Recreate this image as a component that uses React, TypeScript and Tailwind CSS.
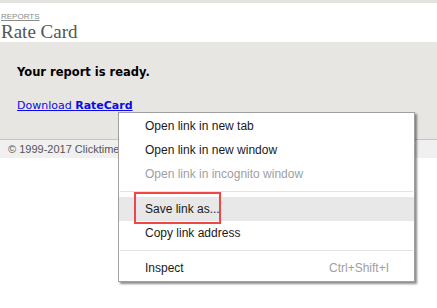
import React from 'react';

const menuFont = { fontFamily: '"Liberation Sans", Arial, sans-serif' };

type Item = { label: string; disabled?: boolean; hot?: boolean; boxed?: boolean; shortcut?: string } | 'sep';

const ITEMS: Item[] = [
  { label: 'Open link in new tab' },
  { label: 'Open link in new window' },
  { label: 'Open link in incognito window', disabled: true },
  'sep',
  { label: 'Save link as...', hot: true, boxed: true },
  { label: 'Copy link address' },
  'sep',
  { label: 'Inspect', shortcut: 'Ctrl+Shift+I' },
];

const ContextMenu = () => (
  <div
    className="absolute left-[118px] top-[112px] w-[297px] border border-[#a0a0a0] bg-white py-px shadow-[2px_2px_2px_rgba(0,0,0,0.45)] text-[12px] text-[#1a1a1a]"
    style={menuFont}
  >
    {ITEMS.map((item, i) =>
      item === 'sep' ? (
        <div key={i} className="flex h-[11px] items-center px-px">
          <div className="h-px w-full bg-[#e3e3e3]" />
        </div>
      ) : (
        <div
          key={i}
          className={`relative flex h-6 items-center justify-between pl-[26px] pr-[25px] ${item.hot ? 'bg-[#e8e8e8]' : ''} ${item.disabled ? 'text-[#a0a0a0]' : ''}`}
        >
          <span>{item.label}</span>
          {item.shortcut && <span className="text-[#a0a0a0]">{item.shortcut}</span>}
          {item.boxed && (
            <div className="absolute left-[15px] top-[-5px] h-[32px] w-[87px] border-2 border-[#f24545]" />
          )}
        </div>
      )
    )}
  </div>
);

export default function App() {
  return (
    <div className="relative h-[308px] w-[437px] overflow-hidden bg-white">
      <div className="h-[3px] bg-[#e4e2de]" />
      <div className="h-[39px] px-[1px] pt-[9px]">
        <div
          className="text-[8px] leading-[9px] text-[#8a8a8a] underline"
          style={{ fontFamily: '"Liberation Sans", Arial, sans-serif' }}
        >
          REPORTS
        </div>
        <div
          className="mt-[1px] text-[19px] leading-[19px] text-[#555]"
          style={{ fontFamily: '"Liberation Serif", Georgia, serif' }}
        >
          Rate Card
        </div>
      </div>
      <div
        className="h-[97px] bg-[#e8e6e2] px-[17px] pt-[23px]"
        style={{ fontFamily: '"DejaVu Sans", Verdana, sans-serif' }}
      >
        <div className="text-[11.5px] leading-[14px] font-bold text-black">Your report is ready.</div>
        <a href="#" className="mt-[20px] block text-[11px] leading-[14px] text-[#0a0ae8] underline">
          Download <b>RateCard</b>
        </a>
      </div>
      <div
        className="h-[19px] border-t border-[#c4c4c4] bg-[#f0f0f0] pl-[8px] text-[11px] leading-[18px] text-[#555]"
        style={{ fontFamily: '"Liberation Sans", Arial, sans-serif' }}
      >
        © 1999-2017 Clicktime.com
      </div>
      <ContextMenu />
    </div>
  );
}
